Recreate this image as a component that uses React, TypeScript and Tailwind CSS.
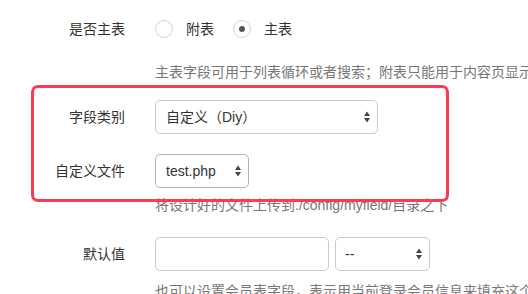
import React from "react";

const Arrows = () => (
  <svg width="8" height="14" viewBox="0 0 8 14" className="shrink-0">
    <path d="M4 1.5 L7 6 L1 6 Z" fill="#444" />
    <path d="M4 12.5 L7 8 L1 8 Z" fill="#444" />
  </svg>
);

const Label = ({ children }: { children: React.ReactNode }) => (
  <div className="w-[125px] shrink-0 text-right text-[14px] text-[#333]">{children}</div>
);

const Radio = ({ checked }: { checked?: boolean }) => (
  <span className="w-[18px] h-[18px] rounded-full border border-[#d4d4d4] bg-white flex items-center justify-center shrink-0">
    {checked && <span className="w-[6px] h-[6px] rounded-full bg-[#555]" />}
  </span>
);

export default function App() {
  return (
    <div
      className="relative w-[528px] h-[294px] overflow-hidden bg-white"
      style={{ fontFamily: '"Liberation Sans", "Noto Sans CJK SC", sans-serif' }}
    >
      <div className="pt-[12px]">
        <div className="flex items-center h-[34px]">
          <Label>是否主表</Label>
          <div className="flex items-center ml-[30px] text-[14px] text-[#333]">
            <Radio />
            <span className="ml-[13px]">附表</span>
            <span className="ml-[19px]"><Radio checked /></span>
            <span className="ml-[13px]">主表</span>
          </div>
        </div>
        <div className="ml-[155px] mt-[16px] h-[20px] leading-[20px] text-[14px] text-[#777] whitespace-nowrap">
          主表字段可用于列表循环或者搜索；附表只能用于内容页显示
        </div>

        <div className="flex items-center h-[34px] mt-[18px]">
          <Label>字段类别</Label>
          <div className="ml-[30px] w-[223px] h-[34px] rounded-[5px] border border-[#c3cad8] flex items-center justify-between pl-[10px] pr-[6px] text-[14px] text-[#333]">
            <span>自定义（Diy）</span>
            <Arrows />
          </div>
        </div>

        <div className="flex items-center h-[34px] mt-[20px]">
          <Label>自定义文件</Label>
          <div className="ml-[30px] w-[94px] h-[34px] rounded-[5px] border border-[#aab3c6] flex items-center justify-between pl-[10px] pr-[6px] text-[14px] text-[#333]">
            <span>test.php</span>
            <Arrows />
          </div>
        </div>
        <div className="ml-[155px] mt-[7px] h-[20px] leading-[20px] text-[14px] text-[#777] whitespace-nowrap">
          将设计好的文件上传到./config/myfield/目录之下
        </div>

        <div className="flex items-center h-[34px] mt-[22px]">
          <Label>默认值</Label>
          <div className="ml-[30px] w-[174px] h-[34px] rounded-[5px] border border-[#c3cad8]" />
          <div className="ml-[6px] w-[95px] h-[34px] rounded-[5px] border border-[#c3cad8] flex items-center justify-between pl-[9px] pr-[6px] text-[14px] text-[#333]">
            <span>--</span>
            <Arrows />
          </div>
        </div>
        <div className="ml-[155px] mt-[10px] h-[20px] leading-[20px] text-[14px] text-[#777] whitespace-nowrap">
          也可以设置会员表字段，表示用当前登录会员信息来填充这个值
        </div>
      </div>

      <div className="absolute left-[31px] top-[85px] w-[418px] h-[117px] border-[3px] border-[#fd3a50] rounded-[7px] pointer-events-none" />
    </div>
  );
}
